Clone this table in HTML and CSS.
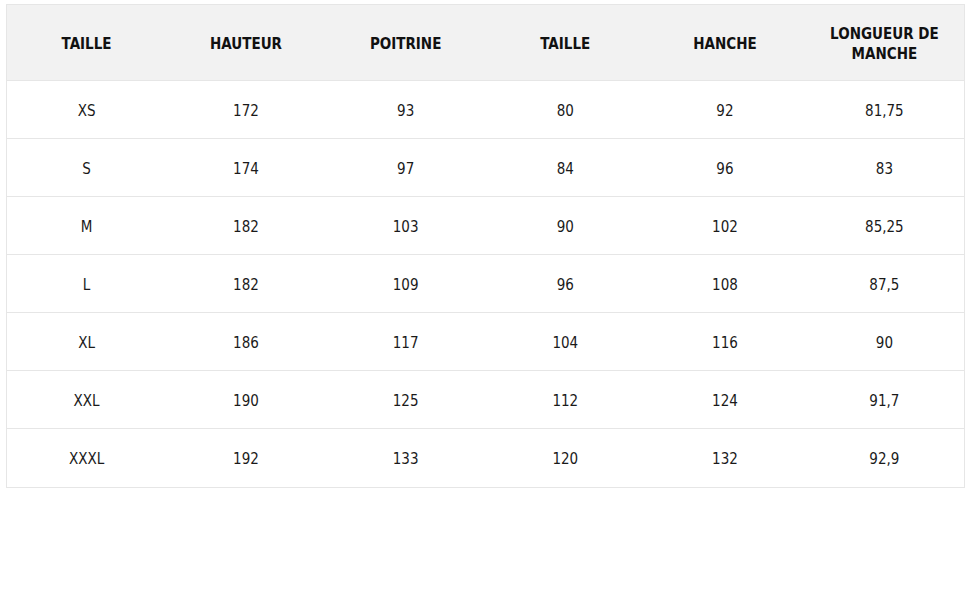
FILE: index.html
```html
<!DOCTYPE html>
<html lang="fr">
<head>
<meta charset="utf-8">
<title>Tableau des tailles</title>
<link rel="stylesheet" href="styles.css">
</head>
<body>
<table class="sizes">
  <thead>
    <tr>
      <th>TAILLE</th>
      <th>HAUTEUR</th>
      <th>POITRINE</th>
      <th>TAILLE</th>
      <th>HANCHE</th>
      <th>LONGUEUR DE<br>MANCHE</th>
    </tr>
  </thead>
  <tbody>
    <tr><td>XS</td><td>172</td><td>93</td><td>80</td><td>92</td><td>81,75</td></tr>
    <tr><td>S</td><td>174</td><td>97</td><td>84</td><td>96</td><td>83</td></tr>
    <tr><td>M</td><td>182</td><td>103</td><td>90</td><td>102</td><td>85,25</td></tr>
    <tr><td>L</td><td>182</td><td>109</td><td>96</td><td>108</td><td>87,5</td></tr>
    <tr><td>XL</td><td>186</td><td>117</td><td>104</td><td>116</td><td>90</td></tr>
    <tr><td>XXL</td><td>190</td><td>125</td><td>112</td><td>124</td><td>91,7</td></tr>
    <tr><td>XXXL</td><td>192</td><td>133</td><td>120</td><td>132</td><td>92,9</td></tr>
  </tbody>
</table>
</body>
</html>
```

FILE: styles.css
```css
html, body {
  margin: 0;
  background: #ffffff;
}
body {
  padding: 4px 5px 0 6px;
  font-family: "DejaVu Sans Condensed", "DejaVu Sans", sans-serif;
  color: #1a1a1a;
}
.sizes {
  width: 959px;
  border-collapse: collapse;
  table-layout: fixed;
  border: 1px solid #e6e6e6;
}
.sizes th {
  background: #f2f2f2;
  height: 73px;
  padding: 2px 0 0 0;
  font-size: 15px;
  font-weight: bold;
  line-height: 20px;
  text-align: center;
  vertical-align: middle;
  color: #111111;
  border-bottom: 1px solid #e6e6e6;
}
.sizes td {
  height: 55px;
  padding: 2px 0 0 0;
  font-size: 15px;
  text-align: center;
  vertical-align: middle;
  border-bottom: 1px solid #e6e6e6;
}
.sizes tbody tr:last-child td {
  height: 56px;
}
```
